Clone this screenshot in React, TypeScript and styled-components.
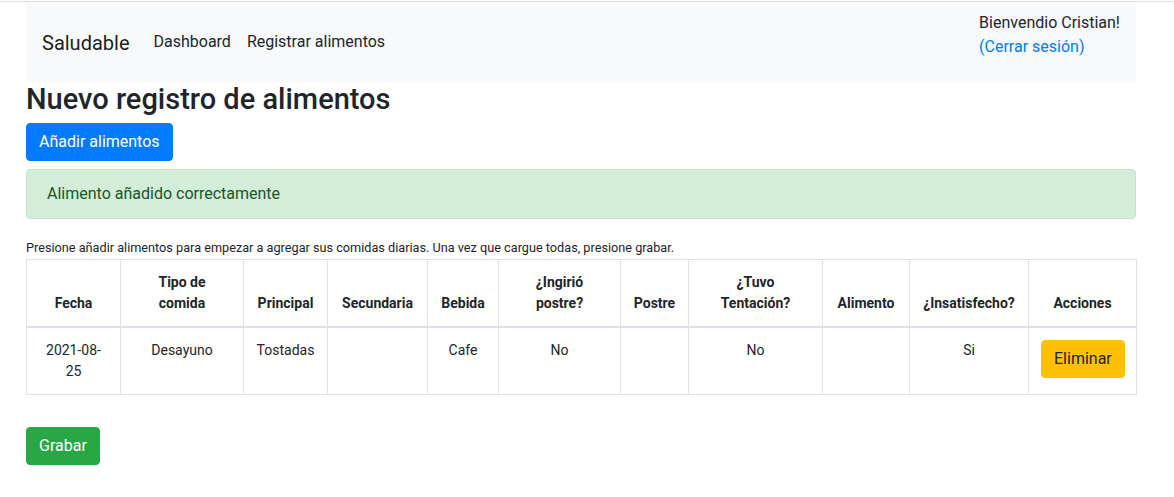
import React from "react";
import styled, { createGlobalStyle } from "styled-components";

const GlobalStyle = createGlobalStyle`
  html, body { margin: 0; padding: 0; background: #ffffff; }
  body {
    font-family: Roboto, "Liberation Sans", Arial, sans-serif;
    font-size: 16px;
    line-height: 1.5;
    color: #212529;
  }
  * { box-sizing: border-box; }
`;

const TopEdge = styled.div`
  height: 2px;
  border-top: 1px solid #ffffff;
  border-bottom: 1px solid #dcdcdc;
`;

const Page = styled.div`
  width: 1110px;
  margin-left: 26px;
`;

const Navbar = styled.nav`
  display: flex;
  align-items: center;
  padding: 8px 16px;
  background: #f8f9fa;
`;

const Brand = styled.a`
  font-size: 20px;
  line-height: 30px;
  padding: 6px 0 4px;
  margin-right: 16px;
  color: rgba(0, 0, 0, 0.9);
  text-decoration: none;
`;

const NavList = styled.ul`
  display: flex;
  list-style: none;
  margin: 0;
  padding: 0;
  flex: 1;
`;

const NavLink = styled.a`
  display: block;
  padding: 8px 8px;
  color: #212529;
  text-decoration: none;
`;

const UserBox = styled.div`
  align-self: flex-start;
  padding-top: 1px;
  padding-bottom: 15px;
  text-align: left;
`;

const Greeting = styled.div`
  color: #212529;
`;

const LogoutLink = styled.a`
  display: block;
  color: #007bff;
  text-decoration: none;
`;

const Title = styled.h3`
  margin: 0 0 6px;
  font-size: 29px;
  font-weight: 500;
  line-height: 1.2;
`;

const Button = styled.button<{ $variant: "primary" | "success" | "warning" }>`
  display: inline-block;
  font-family: inherit;
  font-size: 16px;
  line-height: 24px;
  padding: 6px 12px;
  border-radius: 4px;
  border: 1px solid
    ${(p) => (p.$variant === "primary" ? "#007bff" : p.$variant === "success" ? "#28a745" : "#ffc107")};
  background: ${(p) => (p.$variant === "primary" ? "#007bff" : p.$variant === "success" ? "#28a745" : "#ffc107")};
  color: ${(p) => (p.$variant === "warning" ? "#212529" : "#ffffff")};
  cursor: pointer;
`;

const ButtonRow = styled.div<{ $gap?: number }>`
  display: flex;
  padding-top: ${(p) => p.$gap ?? 0}px;
  margin-bottom: 8px;
`;

const Alert = styled.div`
  padding: 12px 20px;
  margin-bottom: 16px;
  border: 1px solid #c3e6cb;
  border-radius: 4px;
  background: #d4edda;
  color: #155724;
`;

const Hint = styled.div`
  line-height: 24px;
  height: 24px;
`;

const HintText = styled.small`
  font-size: 12.7px;
`;

const Table = styled.table`
  width: 100%;
  table-layout: fixed;
  border-collapse: collapse;
  margin-bottom: 16px;
  font-size: 14px;
  line-height: 21px;
  color: #212529;
`;

const HeadCell = styled.th`
  padding: 12px;
  border: 1px solid #dee2e6;
  border-bottom-width: 2px;
  vertical-align: bottom;
  text-align: center;
  font-weight: 700;
`;

const Cell = styled.td`
  padding: 12px;
  border: 1px solid #dee2e6;
  vertical-align: top;
  text-align: center;
`;

const columns = [
  { label: ["Fecha"], width: 94 },
  { label: ["Tipo de", "comida"], width: 123 },
  { label: ["Principal"], width: 84 },
  { label: ["Secundaria"], width: 100 },
  { label: ["Bebida"], width: 71 },
  { label: ["¿Ingirió", "postre?"], width: 122 },
  { label: ["Postre"], width: 68 },
  { label: ["¿Tuvo", "Tentación?"], width: 134 },
  { label: ["Alimento"], width: 87 },
  { label: ["¿Insatisfecho?"], width: 119 },
  { label: ["Acciones"], width: 108 },
];

const rows = [
  ["2021-08-25", "Desayuno", "Tostadas", "", "Cafe", "No", "", "No", "", "Si"],
];

export default function App() {
  return (
    <>
      <GlobalStyle />
      <TopEdge />
      <Page>
        <Navbar>
          <Brand href="#">Saludable</Brand>
          <NavList>
            <li>
              <NavLink href="#">Dashboard</NavLink>
            </li>
            <li>
              <NavLink href="#">Registrar alimentos</NavLink>
            </li>
          </NavList>
          <UserBox>
            <Greeting>Bienvendio Cristian!</Greeting>
            <LogoutLink href="#">(Cerrar sesión)</LogoutLink>
          </UserBox>
        </Navbar>
        <Title>Nuevo registro de alimentos</Title>
        <ButtonRow>
          <Button $variant="primary">Añadir alimentos</Button>
        </ButtonRow>
        <Alert>Alimento añadido correctamente</Alert>
        <Hint>
          <HintText>
            Presione añadir alimentos para empezar a agregar sus comidas diarias. Una vez que cargue todas, presione grabar.
          </HintText>
        </Hint>
        <Table>
          <colgroup>
            {columns.map((c) => (
              <col key={c.label.join(" ")} style={{ width: c.width }} />
            ))}
          </colgroup>
          <thead>
            <tr>
              {columns.map((c) => (
                <HeadCell key={c.label.join(" ")}>
                  {c.label.map((line, k) => (
                    <React.Fragment key={k}>
                      {k > 0 && <br />}
                      {line}
                    </React.Fragment>
                  ))}
                </HeadCell>
              ))}
            </tr>
          </thead>
          <tbody>
            {rows.map((r, i) => (
              <tr key={i}>
                {r.map((v, j) => (
                  <Cell key={j}>{v}</Cell>
                ))}
                <Cell>
                  <Button $variant="warning">Eliminar</Button>
                </Cell>
              </tr>
            ))}
          </tbody>
        </Table>
        <ButtonRow $gap={16}>
          <Button $variant="success">Grabar</Button>
        </ButtonRow>
      </Page>
    </>
  );
}
